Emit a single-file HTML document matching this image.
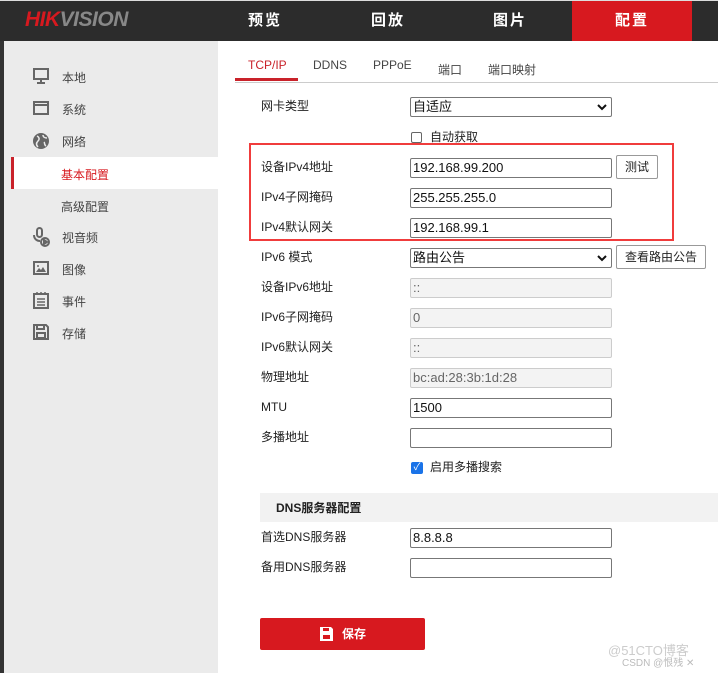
<!DOCTYPE html>
<html><head><meta charset="utf-8"><style>
*{margin:0;padding:0;box-sizing:border-box}
body{width:718px;height:673px;position:relative;background:#fff;font-family:"Liberation Sans","Noto Sans CJK SC",sans-serif;overflow:hidden;color:#222}
.a{position:absolute}
.hdr{left:0;top:0;width:718px;height:41px;background:#2c2c2c;border-top:1px solid #ddd}
.nav{top:1px;height:40px;line-height:40px;color:#fff;font-size:15px;font-weight:bold;text-align:center;width:120px;letter-spacing:2px}
.side{left:4px;top:41px;width:214px;height:632px;background:#ebebeb}
.si{left:62px;font-size:12px;color:#444}
.lbl{left:261px;font-size:12px;color:#222;line-height:16px}
.inp{left:410px;width:202px;height:20px;border:1px solid #777;border-radius:2px;font-size:13px;line-height:18px;padding-left:2px;color:#111;background:#fff}
.dis{background:#f3f3f3;border-color:#ccc;color:#666}
.btn{height:24px;border:1px solid #999;border-radius:2px;background:#fff;font-size:12px;line-height:22px;text-align:center}
.tab{top:58px;font-size:12px;color:#444}
.chev{position:absolute;right:4px;top:5px}
</style></head><body>
<div class="a" style="left:0;top:0;width:4px;height:673px;background:#333"></div>
<div class="a hdr"></div>
<div class="a" style="left:25px;top:8px;font-size:21px;font-weight:bold;font-style:italic;letter-spacing:-0.5px"><span style="color:#d7191f">HIK</span><span style="color:#888">VISION</span></div>
<div class="a nav" style="left:205px">预览</div>
<div class="a nav" style="left:328px">回放</div>
<div class="a nav" style="left:450px">图片</div>
<div class="a nav" style="left:572px;background:#d7191f">配置</div>
<div class="a side"></div>
<div class="a" style="left:11px;top:157px;width:207px;height:32px;background:#fff;border-left:3px solid #c9222a"></div>
<svg class="a" style="left:32px;top:67px" width="18" height="18" viewBox="0 0 18 18" fill="none" stroke="#666" stroke-width="2"><rect x="2" y="2" width="14" height="10"/><path d="M9 12v3M5 16h8"/></svg>
<svg class="a" style="left:32px;top:100px" width="18" height="16" viewBox="0 0 18 16" fill="none" stroke="#666" stroke-width="2"><rect x="2" y="2" width="14" height="12"/><path d="M3 5h12"/></svg>
<svg class="a" style="left:32px;top:132px" width="18" height="18" viewBox="0 0 18 18"><circle cx="9" cy="9" r="8" fill="#666"/><path d="M5 4c2 1 3 3 1 5s-2 4 0 6M11 3c0 2 2 3 4 3M12 10c1 1 0 3 2 4" stroke="#ebebeb" stroke-width="1.5" fill="none"/></svg>
<svg class="a" style="left:32px;top:227px" width="18" height="20" viewBox="0 0 18 20" fill="none" stroke="#666" stroke-width="2"><rect x="5" y="1" width="5" height="9" rx="2.5"/><path d="M2 8c0 4 3 6 6 6"/><circle cx="13" cy="15" r="4"/><path d="M12 13l3 2-3 2z" fill="#666"/></svg>
<svg class="a" style="left:32px;top:260px" width="18" height="16" viewBox="0 0 18 16"><rect x="2" y="2" width="14" height="12" fill="none" stroke="#666" stroke-width="2"/><path d="M4 12l3-4 2 2 2-3 3 5z" fill="#666"/><circle cx="6" cy="6" r="1" fill="#666"/></svg>
<svg class="a" style="left:32px;top:291px" width="18" height="18" viewBox="0 0 18 18" fill="none" stroke="#666" stroke-width="2"><rect x="2" y="3" width="14" height="14"/><path d="M5 1v3M9 1v3M13 1v3M5 8h8M5 11h8M5 14h8" stroke-width="1.5"/></svg>
<svg class="a" style="left:32px;top:323px" width="18" height="18" viewBox="0 0 18 18" fill="none" stroke="#666" stroke-width="2"><path d="M2 2h12l2 2v12H2z"/><rect x="5" y="10" width="8" height="5"/><path d="M5 2v4h7V2"/></svg>
<div class="a si" style="top:69px">本地</div>
<div class="a si" style="top:101px">系统</div>
<div class="a si" style="top:133px">网络</div>
<div class="a si" style="left:61px;top:166px;color:#d7191f">基本配置</div>
<div class="a si" style="left:61px;top:198px">高级配置</div>
<div class="a si" style="top:229px">视音频</div>
<div class="a si" style="top:261px">图像</div>
<div class="a si" style="top:293px">事件</div>
<div class="a si" style="top:325px">存储</div>
<div class="a" style="left:235px;top:82px;width:483px;height:1px;background:#ccc"></div>
<div class="a" style="left:235px;top:78px;width:63px;height:3px;background:#c9222a"></div>
<div class="a tab" style="left:248px;color:#c9222a">TCP/IP</div>
<div class="a tab" style="left:313px">DDNS</div>
<div class="a tab" style="left:373px">PPPoE</div>
<div class="a tab" style="left:438px;top:61px">端口</div>
<div class="a tab" style="left:488px;top:61px">端口映射</div>
<div class="a lbl" style="top:98px">网卡类型</div>
<div class="a inp" style="top:97px">自适应<svg class="chev" width="10" height="8" viewBox="0 0 10 8"><path d="M1 2l4 4 4-4" stroke="#111" stroke-width="2" fill="none"/></svg></div>
<div class="a" style="left:411px;top:132px;width:11px;height:11px;border:1px solid #666;border-radius:2px"></div>
<div class="a lbl" style="left:430px;top:129px">自动获取</div>
<div class="a" style="left:249px;top:143px;width:425px;height:98px;border:2px solid #f03c3c"></div>
<div class="a lbl" style="top:159px">设备IPv4地址</div>
<div class="a inp" style="top:158px">192.168.99.200</div>
<div class="a btn" style="left:616px;top:155px;width:42px">测试</div>
<div class="a lbl" style="top:189px">IPv4子网掩码</div>
<div class="a inp" style="top:188px">255.255.255.0</div>
<div class="a lbl" style="top:219px">IPv4默认网关</div>
<div class="a inp" style="top:218px">192.168.99.1</div>
<div class="a lbl" style="top:249px">IPv6 模式</div>
<div class="a inp" style="top:248px">路由公告<svg class="chev" width="10" height="8" viewBox="0 0 10 8"><path d="M1 2l4 4 4-4" stroke="#111" stroke-width="2" fill="none"/></svg></div>
<div class="a btn" style="left:616px;top:245px;width:90px">查看路由公告</div>
<div class="a lbl" style="top:279px">设备IPv6地址</div>
<div class="a inp dis" style="top:278px">::</div>
<div class="a lbl" style="top:309px">IPv6子网掩码</div>
<div class="a inp dis" style="top:308px">0</div>
<div class="a lbl" style="top:339px">IPv6默认网关</div>
<div class="a inp dis" style="top:338px">::</div>
<div class="a lbl" style="top:369px">物理地址</div>
<div class="a inp dis" style="top:368px">bc:ad:28:3b:1d:28</div>
<div class="a lbl" style="top:399px">MTU</div>
<div class="a inp" style="top:398px">1500</div>
<div class="a lbl" style="top:429px">多播地址</div>
<div class="a inp" style="top:428px"></div>
<div class="a" style="left:411px;top:462px;width:12px;height:12px;background:#1a73e8;border-radius:2px;color:#fff;font-size:10px;line-height:12px;text-align:center">✓</div>
<div class="a lbl" style="left:430px;top:459px">启用多播搜索</div>
<div class="a" style="left:260px;top:493px;width:458px;height:29px;background:#f2f2f2"></div>
<div class="a lbl" style="left:276px;top:500px;font-weight:bold">DNS服务器配置</div>
<div class="a lbl" style="top:529px">首选DNS服务器</div>
<div class="a inp" style="top:528px">8.8.8.8</div>
<div class="a lbl" style="top:559px">备用DNS服务器</div>
<div class="a inp" style="top:558px"></div>
<div class="a" style="left:260px;top:618px;width:165px;height:32px;background:#d7191f;border-radius:2px;color:#fff;font-size:12px;line-height:32px;font-weight:bold"><svg style="position:absolute;left:60px;top:9px" width="13" height="14" viewBox="0 0 13 14"><path d="M0 0h11l2 2v12H0z" fill="#fff"/><rect x="3" y="1" width="6" height="3" fill="#d7191f"/><rect x="3" y="8" width="7" height="4" fill="#d7191f"/></svg><span style="position:absolute;left:82px">保存</span></div>
<div class="a" style="left:608px;top:640px;font-size:13px;color:#ccc">@51CTO博客</div>
<div class="a" style="left:622px;top:654px;font-size:10px;color:#bbb">CSDN @恨残 ✕</div>
</body></html>
